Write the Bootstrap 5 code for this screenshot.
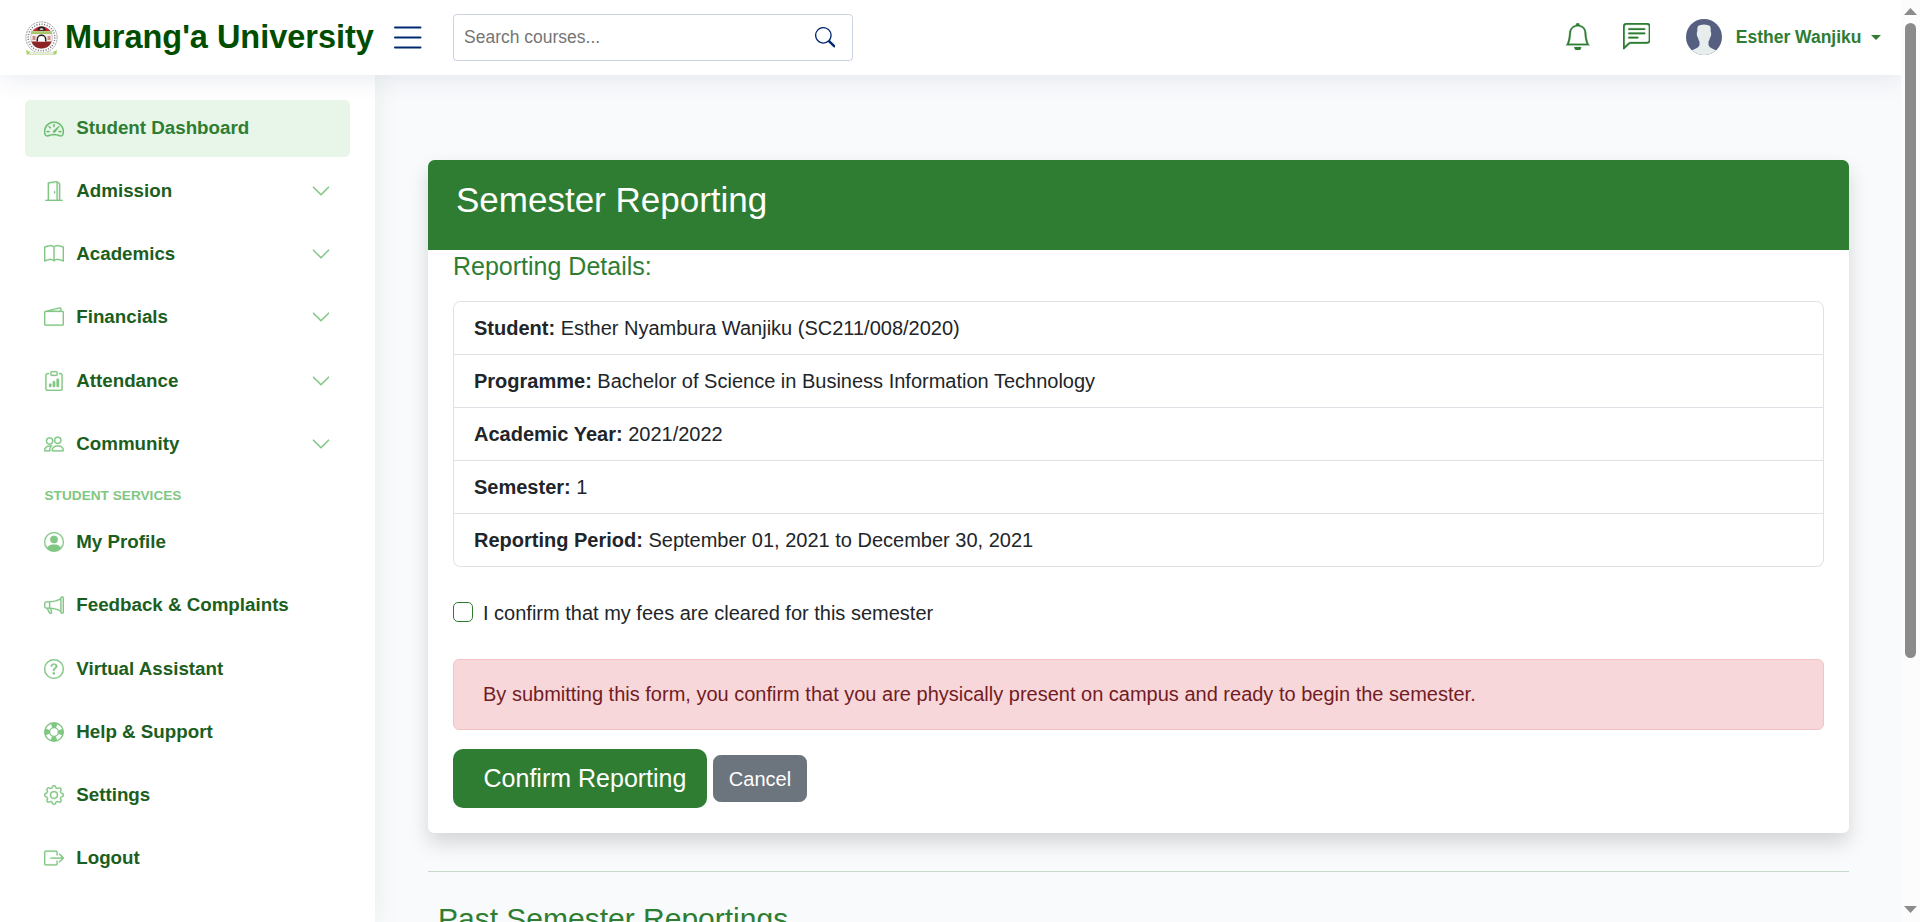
<!DOCTYPE html>
<html lang="en">
<head>
<meta charset="utf-8">
<meta name="viewport" content="width=device-width, initial-scale=1">
<title>Semester Reporting - Murang'a University</title>
<link href="https://cdn.jsdelivr.net/npm/bootstrap@5.3.0/dist/css/bootstrap.min.css" rel="stylesheet">
<style>
  html { font-size: 20px; }
  body { font-family: "Liberation Sans", Arial, sans-serif; background: #f9fafc; color: #212529; }
  svg { fill: currentColor; display: block; flex: none; }
  .ico { width: 20px; height: 20px; stroke: currentColor; stroke-width: .2px; }
  .page-header { height: 75px; padding-left: 25px; background: #fff; box-shadow: 0 2.5px 25px rgba(1, 41, 112, .1); z-index: 3; position: relative; }
  .brand { width: 350px; color: #004d00; font-size: 32.5px; font-weight: 700; line-height: 1; gap: 7px; white-space: nowrap; letter-spacing: -.03px; }
  .burger { color: #012970; width: 40px; height: 40px; margin-left: 12px; }
  .search-box { width: 400px; height: 47px; margin-left: 26px; border: 1px solid rgba(1, 41, 112, .2); border-radius: 3.75px; padding: 0 17px 0 10px; }
  .search-box input { border: 0; outline: 0; padding: 0; font-size: 17.5px; background: transparent; }
  .search-box input::placeholder { color: #757575; opacity: 1; }
  .search-box svg { color: #012970; width: 20.5px; height: 20.5px; }
  .top-icons { color: #2e7d32; padding-right: 20.5px; }
  .top-icons .glyph { width: 27.5px; height: 27.5px; stroke: currentColor; stroke-width: .15px; position: relative; top: -1px; }
  .avatar { position: relative; top: -1px; }
  .user-name { font-size: 17.5px; font-weight: 700; margin-left: 14px; }
  .user-name::after { margin-left: 9px !important; vertical-align: 3px !important; }
  .side-menu { width: 375px; padding: 25px; background: #fff; box-shadow: 0 0 25px rgba(46, 125, 50, .1); z-index: 2; position: relative; }
  .side-link { height: 57px; margin-bottom: 6.2px; padding: 0 18.75px; border-radius: 5px; font-size: 18.75px; font-weight: 700; color: #1b5e20; text-decoration: none; gap: 12.5px; }
  .side-link svg { color: #81c784; }
  .side-link.active { background: #e8f5e9; color: #2e7d32; margin-bottom: 5.5px; }
  .side-link.active svg { color: #66bb6a; }
  .side-heading { font-size: 13.65px; font-weight: 700; color: #81c784; line-height: 20px; margin: 14px 0 7.5px 19.5px; height: 20px; }
  .main-area { padding: 85px 52px 0 53px; min-width: 0; }
  .report-card { border: 0; border-radius: 6px; box-shadow: 0 10px 20px rgba(0, 0, 0, .15); height: 673px; }
  .report-head { background: #2e7d32; color: #fff; height: 90px; padding: 18.75px 28px; border-radius: 6px 6px 0 0; border-bottom: 0; }
  .report-head h3 { font-size: 35px; }
  .report-body { padding: 1px 25px 0; }
  .green-title { color: #2e7d32; }
  .list-group-item { padding: 11px 20px; border-color: #dee2e6; color: #212529; line-height: 30px; }
  .list-group { --bs-list-group-border-radius: 7.5px; margin-bottom: 30px; }
  .form-check { line-height: 30px; margin-bottom: 31px; padding-left: 30px; padding-top: 1px; min-height: 0; }
  .form-check-input { border-color: #2e7d32; width: 20px; height: 20px; margin-top: 4px; margin-left: -30px !important; border-radius: 5px; }
  .notice { background: #f8d7da; border: 1px solid #f5c2c7; color: #721c24; border-radius: 6px; height: 71px; padding: 19px 29px; margin-bottom: 19px; }
  .btn-confirm, .btn-confirm:hover { background: #2e7d32; color: #fff; font-size: 25px; height: 59px; width: 254px; border-radius: 10px; padding: 0 20px 0 30px; border: 0; }
  .btn-cancel { width: 94px; height: 47px; padding: 0; border-radius: 7.5px; }
  .divider { border-top: 1px solid #2e7d32; opacity: .25; margin: 38px 0 29px; }
  .scroll-track { width: 19px; background: #fcfcfc; color: #8b8b8b; padding: 8px 0 9px; }
  .scroll-thumb { width: 11px; height: 635px; border-radius: 6px; background: #8b8b8b; margin-top: 8px; }
</style>
</head>
<body class="d-flex vh-100 overflow-hidden">
<svg width="0" height="0" class="position-absolute" aria-hidden="true">
  <symbol id="i-speed" viewBox="0 0 16 16"><path d="M8 4a.5.5 0 0 1 .5.5V6a.5.5 0 0 1-1 0V4.5A.5.5 0 0 1 8 4zM3.732 5.732a.5.5 0 0 1 .707 0l.915.914a.5.5 0 1 1-.708.708l-.914-.915a.5.5 0 0 1 0-.707zM2 10a.5.5 0 0 1 .5-.5h1.586a.5.5 0 0 1 0 1H2.5A.5.5 0 0 1 2 10zm9.5 0a.5.5 0 0 1 .5-.5h1.5a.5.5 0 0 1 0 1H12a.5.5 0 0 1-.5-.5zm.754-4.246a.389.389 0 0 0-.527-.02L7.547 9.31a.91.91 0 1 0 1.302 1.258l3.434-4.297a.389.389 0 0 0-.029-.518z"/><path fill-rule="evenodd" d="M0 10a8 8 0 1 1 15.547 2.661c-.442 1.253-1.845 1.602-2.932 1.25C11.309 13.488 9.475 13 8 13c-1.474 0-3.31.488-4.615.911-1.087.352-2.49.003-2.932-1.25A7.988 7.988 0 0 1 0 10zm8-7a7 7 0 0 0-6.603 9.329c.203.575.923.876 1.68.63C4.397 12.533 6.358 12 8 12s3.604.532 4.923.96c.757.245 1.477-.056 1.68-.631A7 7 0 0 0 8 3z"/></symbol>
  <symbol id="i-door" viewBox="0 0 16 16"><path d="M8.5 10c-.276 0-.5-.448-.5-1s.224-1 .5-1 .5.448.5 1-.224 1-.5 1z"/><path d="M10.828.122A.5.5 0 0 1 11 .5V1h.5A1.5 1.5 0 0 1 13 2.5V15h1.5a.5.5 0 0 1 0 1h-13a.5.5 0 0 1 0-1H3V1.5a.5.5 0 0 1 .43-.495l7-1a.5.5 0 0 1 .398.117zM11.5 2H11v13h1V2.5a.5.5 0 0 0-.5-.5zM4 1.934V15h6V1.077l-6 .857z"/></symbol>
  <symbol id="i-book" viewBox="0 0 16 16"><path d="M1 2.828c.885-.37 2.154-.769 3.388-.893 1.33-.134 2.458.063 3.112.752v9.746c-.935-.53-2.12-.603-3.213-.493-1.18.12-2.37.461-3.287.811V2.828zm7.5-.141c.654-.689 1.782-.886 3.112-.752 1.234.124 2.503.523 3.388.893v9.923c-.918-.35-2.107-.692-3.287-.81-1.094-.111-2.278-.039-3.213.492V2.687zM8 1.783C7.015.936 5.587.81 4.287.94c-1.514.153-3.042.672-3.994 1.105A.5.5 0 0 0 0 2.5v11a.5.5 0 0 0 .707.455c.882-.4 2.303-.881 3.68-1.02 1.409-.142 2.59.087 3.223.877a.5.5 0 0 0 .78 0c.633-.79 1.814-1.019 3.222-.877 1.378.139 2.8.62 3.681 1.02A.5.5 0 0 0 16 13.5v-11a.5.5 0 0 0-.293-.455c-.952-.433-2.48-.952-3.994-1.105C10.413.809 8.985.936 8 1.783z"/></symbol>
  <symbol id="i-wallet" viewBox="0 0 16 16"><path d="M12.136.326A1.5 1.5 0 0 1 14 1.78V3h.5A1.5 1.5 0 0 1 16 4.5v9a1.5 1.5 0 0 1-1.5 1.5h-13A1.5 1.5 0 0 1 0 13.5v-9a1.5 1.5 0 0 1 1.432-1.499L12.136.326zM5.562 3H13V1.78a.5.5 0 0 0-.621-.484L5.562 3zM1.5 4a.5.5 0 0 0-.5.5v9a.5.5 0 0 0 .5.5h13a.5.5 0 0 0 .5-.5v-9a.5.5 0 0 0-.5-.5h-13z"/></symbol>
  <symbol id="i-clip" viewBox="0 0 16 16"><path d="M4 11a1 1 0 1 1 2 0v1a1 1 0 1 1-2 0v-1zm6-4a1 1 0 1 1 2 0v5a1 1 0 1 1-2 0V7zM7 9a1 1 0 0 1 2 0v3a1 1 0 1 1-2 0V9z"/><path d="M4 1.5H3a2 2 0 0 0-2 2V14a2 2 0 0 0 2 2h10a2 2 0 0 0 2-2V3.5a2 2 0 0 0-2-2h-1v1h1a1 1 0 0 1 1 1V14a1 1 0 0 1-1 1H3a1 1 0 0 1-1-1V3.5a1 1 0 0 1 1-1h1v-1z"/><path d="M9.5 1a.5.5 0 0 1 .5.5v1a.5.5 0 0 1-.5.5h-3a.5.5 0 0 1-.5-.5v-1a.5.5 0 0 1 .5-.5h3zm-3-1A1.5 1.5 0 0 0 5 1.5v1A1.5 1.5 0 0 0 6.5 4h3A1.5 1.5 0 0 0 11 2.5v-1A1.5 1.5 0 0 0 9.5 0h-3z"/></symbol>
  <symbol id="i-people" viewBox="0 0 16 16"><path d="M15 14s1 0 1-1-1-4-5-4-5 3-5 4 1 1 1 1h8zm-7.978-1A.261.261 0 0 1 7 12.996c.001-.264.167-1.03.76-1.72C8.312 10.629 9.282 10 11 10c1.717 0 2.687.63 3.24 1.276.593.69.758 1.457.76 1.72l-.008.002a.274.274 0 0 1-.014.002H7.022zM11 7a2 2 0 1 0 0-4 2 2 0 0 0 0 4zm3-2a3 3 0 1 1-6 0 3 3 0 0 1 6 0zM6.936 9.28a5.88 5.88 0 0 0-1.23-.247A7.35 7.35 0 0 0 5 9c-4 0-5 3-5 4 0 .667.333 1 1 1h4.216A2.238 2.238 0 0 1 5 13c0-1.01.377-2.042 1.09-2.904.243-.294.526-.569.846-.816zM4.92 10A5.493 5.493 0 0 0 4 13H1c0-.26.164-1.03.76-1.724.545-.636 1.492-1.256 3.16-1.275zM1.5 5.5a3 3 0 1 1 6 0 3 3 0 0 1-6 0zm3-2a2 2 0 1 0 0 4 2 2 0 0 0 0-4z"/></symbol>
  <symbol id="i-person" viewBox="0 0 16 16"><path d="M11 6a3 3 0 1 1-6 0 3 3 0 0 1 6 0z"/><path fill-rule="evenodd" d="M0 8a8 8 0 1 1 16 0A8 8 0 0 1 0 8zm8-7a7 7 0 0 0-5.468 11.37C3.242 11.226 4.805 10 8 10s4.757 1.225 5.468 2.37A7 7 0 0 0 8 1z"/></symbol>
  <symbol id="i-mega" viewBox="0 0 16 16"><path d="M13 2.5a1.5 1.5 0 0 1 3 0v11a1.5 1.5 0 0 1-3 0v-.214c-2.162-1.241-4.49-1.843-6.912-2.083l.405 2.712A1 1 0 0 1 5.51 15.1h-.548a1 1 0 0 1-.916-.599l-1.85-3.49a68.14 68.14 0 0 0-.202-.003A2.014 2.014 0 0 1 0 9V7a2.02 2.02 0 0 1 1.992-2.013 74.663 74.663 0 0 0 2.483-.075c3.043-.154 6.148-.849 8.525-2.199V2.5zm1 0v11a.5.5 0 0 0 1 0v-11a.5.5 0 0 0-1 0zm-1 1.35c-2.344 1.205-5.209 1.842-8 2.033v4.233c.18.01.359.022.537.036 2.568.189 5.093.744 7.463 1.993V3.85zm-9 6.215v-4.13a95.09 95.09 0 0 1-1.992.052A1.02 1.02 0 0 0 1 7v2c0 .55.448 1.002 1.006 1.009A60.49 60.49 0 0 1 4 10.065zm-.657.975 1.609 3.037.01.024h.548l-.002-.014-.443-2.966a68.019 68.019 0 0 0-1.722-.082z"/></symbol>
  <symbol id="i-question" viewBox="0 0 16 16"><path d="M8 15A7 7 0 1 1 8 1a7 7 0 0 1 0 14zm0 1A8 8 0 1 0 8 0a8 8 0 0 0 0 16z"/><path d="M5.255 5.786a.237.237 0 0 0 .241.247h.825c.138 0 .248-.113.266-.25.09-.656.54-1.134 1.342-1.134.686 0 1.314.343 1.314 1.168 0 .635-.374.927-.965 1.371-.673.489-1.206 1.06-1.168 1.987l.003.217a.25.25 0 0 0 .25.246h.811a.25.25 0 0 0 .25-.25v-.105c0-.718.273-.927 1.01-1.486.609-.463 1.244-.977 1.244-2.056 0-1.511-1.276-2.241-2.673-2.241-1.267 0-2.655.59-2.75 2.286zm1.557 5.763c0 .533.425.927 1.01.927.609 0 1.028-.394 1.028-.927 0-.552-.42-.94-1.029-.94-.584 0-1.009.388-1.009.94z"/></symbol>
  <symbol id="i-life" viewBox="0 0 16 16"><g fill="none" stroke="currentColor" stroke-width="1.1"><circle cx="8" cy="8" r="7.45"/><circle cx="8" cy="8" r="3.5"/><circle cx="8" cy="8" r="5.5" stroke-width="4" stroke-dasharray="4.32 4.32" stroke-dashoffset="2.16"/></g></symbol>
  <symbol id="i-gear" viewBox="0 0 16 16"><path d="M8 4.754a3.246 3.246 0 1 0 0 6.492 3.246 3.246 0 0 0 0-6.492zM5.754 8a2.246 2.246 0 1 1 4.492 0 2.246 2.246 0 0 1-4.492 0z"/><path d="M9.796 1.343c-.527-1.79-3.065-1.79-3.592 0l-.094.319a.873.873 0 0 1-1.255.52l-.292-.16c-1.64-.892-3.433.902-2.54 2.541l.159.292a.873.873 0 0 1-.52 1.255l-.319.094c-1.79.527-1.79 3.065 0 3.592l.319.094a.873.873 0 0 1 .52 1.255l-.16.292c-.892 1.64.901 3.434 2.541 2.54l.292-.159a.873.873 0 0 1 1.255.52l.094.319c.527 1.79 3.065 1.79 3.592 0l.094-.319a.873.873 0 0 1 1.255-.52l.292.16c1.64.893 3.434-.902 2.54-2.541l-.159-.292a.873.873 0 0 1 .52-1.255l.319-.094c1.79-.527 1.79-3.065 0-3.592l-.319-.094a.873.873 0 0 1-.52-1.255l.16-.292c.893-1.64-.902-3.433-2.541-2.54l-.292.159a.873.873 0 0 1-1.255-.52l-.094-.319zm-2.633.283c.246-.835 1.428-.835 1.674 0l.094.319a1.873 1.873 0 0 0 2.693 1.115l.291-.16c.764-.415 1.6.42 1.184 1.185l-.159.292a1.873 1.873 0 0 0 1.116 2.692l.318.094c.835.246.835 1.428 0 1.674l-.319.094a1.873 1.873 0 0 0-1.115 2.693l.16.291c.415.764-.42 1.6-1.185 1.184l-.291-.159a1.873 1.873 0 0 0-2.693 1.116l-.094.318c-.246.835-1.428.835-1.674 0l-.094-.319a1.873 1.873 0 0 0-2.692-1.115l-.292.16c-.764.415-1.6-.42-1.184-1.185l.159-.291A1.873 1.873 0 0 0 1.945 8.93l-.319-.094c-.835-.246-.835-1.428 0-1.674l.319-.094A1.873 1.873 0 0 0 3.06 4.377l-.16-.292c-.415-.764.42-1.6 1.185-1.184l.292.159a1.873 1.873 0 0 0 2.692-1.115l.094-.319z"/></symbol>
  <symbol id="i-exit" viewBox="0 0 16 16"><path d="M10 12.5a.5.5 0 0 1-.5.5h-8a.5.5 0 0 1-.5-.5v-9a.5.5 0 0 1 .5-.5h8a.5.5 0 0 1 .5.5v2a.5.5 0 0 0 1 0v-2A1.5 1.5 0 0 0 9.5 2h-8A1.5 1.5 0 0 0 0 3.5v9A1.5 1.5 0 0 0 1.5 14h8a1.5 1.5 0 0 0 1.5-1.5v-2a.5.5 0 0 0-1 0v2z"/><path d="M15.854 8.354a.5.5 0 0 0 0-.708l-3-3a.5.5 0 0 0-.708.708L14.293 7.5H5.5a.5.5 0 0 0 0 1h8.793l-2.147 2.146a.5.5 0 0 0 .708.708l3-3z"/></symbol>
  <symbol id="i-down" viewBox="0 0 16 16"><path d="M1.646 4.646a.5.5 0 0 1 .708 0L8 10.293l5.646-5.647a.5.5 0 0 1 .708.708l-6 6a.5.5 0 0 1-.708 0l-6-6a.5.5 0 0 1 0-.708z"/></symbol>
</svg>

<div class="d-flex flex-column flex-grow-1 overflow-hidden">
  <header class="page-header d-flex align-items-center flex-shrink-0">
    <a class="brand d-flex align-items-center text-decoration-none" href="#">
      <svg width="33" height="34" viewBox="0 0 33 34">
        <circle cx="16.5" cy="16.500" r="15.6" fill="#fff" stroke="#888" stroke-width=".8" stroke-dasharray="2 .8"/>
        <circle cx="16.5" cy="16.500" r="13.300" fill="none" stroke="#777" stroke-width="1.6" stroke-dasharray="1 1.6"/>
        <circle cx="16.5" cy="16.500" r="11" fill="#f6ebe9" stroke="#888" stroke-width=".4"/>
        <path d="M7.600 10a11 11 0 0 1 17.800 0z" fill="#c9252b"/>
        <path d="M12.500 9.500a4 4 0 0 1 8 0z" fill="#222"/>
        <path d="M14.500 8.800a2 1.600 0 0 1 4 0z" fill="#fff"/>
        <path d="M6 10.200h21v2.800H6z" fill="#a5c96a"/>
        <path d="M6.300 20.500h20.400a11 11 0 0 1-20.400 0z" fill="#8f2424"/>
        <path d="M12.300 20.500v-2a4.200 4.200 0 0 1 8.400 0v2" fill="#fff" stroke="#222" stroke-width="1.500"/>
        <path d="M7.500 15h3v4h-3zM22.500 15h3v4h-3z" fill="#c98f8c"/>
        <path d="M1 29l3 1.500q12.500 2.500 25 0l3-1.500-.7 4.500H1.700z" fill="#a9d36f"/>
        <path d="M4.500 30.600q12 1.800 24 0v2.400h-24z" fill="#e9ebe0"/>
      </svg>
      <span>Murang'a University</span>
    </a>
    <svg class="burger" viewBox="0 0 40 40"><path fill="none" stroke="currentColor" stroke-width="2" stroke-linecap="round" d="M8 9.500h25.500M8 19.500h25.500M8 29.500h25.500"/></svg>
    <form class="search-box d-flex align-items-center">
      <input class="flex-grow-1" type="text" placeholder="Search courses...">
      <svg viewBox="0 0 16 16"><path d="M11.742 10.344a6.500 6.500 0 1 0-1.397 1.398h-.001c.03.04.062.078.098.115l3.850 3.850a1 1 0 0 0 1.415-1.414l-3.850-3.850a1.007 1.007 0 0 0-.115-.1zM12 6.500a5.500 5.500 0 1 1-11 0 5.500 5.500 0 0 1 11 0z"/></svg>
    </form>
    <div class="top-icons d-flex align-items-center ms-auto">
      <svg class="glyph" style="margin-right:31px" viewBox="0 0 16 16"><path d="M8 16a2 2 0 0 0 2-2H6a2 2 0 0 0 2 2zM8 1.918l-.797.161A4.002 4.002 0 0 0 4 6c0 .628-.134 2.197-.459 3.742-.16.767-.376 1.566-.663 2.258h10.244c-.287-.692-.502-1.490-.663-2.258C12.134 8.197 12 6.628 12 6a4.002 4.002 0 0 0-3.203-3.920L8 1.917zM14.220 12c.223.447.481.801.78 1H1c.299-.199.557-.553.78-1C2.680 10.200 3 6.880 3 6c0-2.420 1.720-4.440 4.005-4.901a1 1 0 1 1 1.990 0A5.002 5.002 0 0 1 13 6c0 .88.32 4.200 1.220 6z"/></svg>
      <svg class="glyph" style="margin-right:35.500px" viewBox="0 0 16 16"><path d="M14 1a1 1 0 0 1 1 1v8a1 1 0 0 1-1 1H4.414A2 2 0 0 0 3 11.586l-2 2V2a1 1 0 0 1 1-1h12zM2 0a2 2 0 0 0-2 2v12.793a.5.5 0 0 0 .854.353l2.853-2.853A1 1 0 0 1 4.414 12H14a2 2 0 0 0 2-2V2a2 2 0 0 0-2-2H2z"/><path d="M3 3.500a.5.5 0 0 1 .5-.5h9a.5.5 0 0 1 0 1h-9a.5.5 0 0 1-.5-.5zM3 6a.5.5 0 0 1 .5-.5h9a.5.5 0 0 1 0 1h-9A.5.5 0 0 1 3 6zm0 2.500a.5.5 0 0 1 .5-.5h5a.5.5 0 0 1 0 1h-5a.5.5 0 0 1-.5-.5z"/></svg>
      <svg class="avatar" width="36" height="36" viewBox="0 0 36 36"><defs><clipPath id="round"><circle cx="18" cy="18" r="18"/></clipPath></defs><g clip-path="url(#round)"><path fill="#556080" d="M0 0h36v36H0z"/><path fill="#e7eced" d="M12 7q2-1.500 6-1.500t6 1.500q1 1.500 .8 6 .6 .3 .4 2.500-.3 2.500-1.200 3-.4 2.500-1.500 4v3.500q.5 2 3.500 3.500l5.500 2.500v4h-27v-4l5.500-2.500q3-1.500 3.500-3.500v-3.500q-1.100-1.500-1.500-4-.9-.5-1.200-3-.2-2.200 .4-2.500-.2-4.500 .8-6z"/></g></svg>
      <span class="user-name dropdown-toggle">Esther Wanjiku</span>
    </div>
  </header>

  <div class="d-flex flex-grow-1 overflow-hidden">
    <aside class="side-menu flex-shrink-0">
      <a class="side-link active d-flex align-items-center" href="#"><svg class="ico"><use href="#i-speed"/></svg>Student Dashboard</a>
      <a class="side-link d-flex align-items-center" href="#"><svg class="ico"><use href="#i-door"/></svg>Admission<svg class="ico ms-auto"><use href="#i-down"/></svg></a>
      <a class="side-link d-flex align-items-center" href="#"><svg class="ico"><use href="#i-book"/></svg>Academics<svg class="ico ms-auto"><use href="#i-down"/></svg></a>
      <a class="side-link d-flex align-items-center" href="#"><svg class="ico"><use href="#i-wallet"/></svg>Financials<svg class="ico ms-auto"><use href="#i-down"/></svg></a>
      <a class="side-link d-flex align-items-center" href="#"><svg class="ico"><use href="#i-clip"/></svg>Attendance<svg class="ico ms-auto"><use href="#i-down"/></svg></a>
      <a class="side-link d-flex align-items-center" href="#"><svg class="ico"><use href="#i-people"/></svg>Community<svg class="ico ms-auto"><use href="#i-down"/></svg></a>
      <div class="side-heading text-uppercase">Student Services</div>
      <a class="side-link d-flex align-items-center" href="#"><svg class="ico"><use href="#i-person"/></svg>My Profile</a>
      <a class="side-link d-flex align-items-center" href="#"><svg class="ico"><use href="#i-mega"/></svg>Feedback &amp; Complaints</a>
      <a class="side-link d-flex align-items-center" href="#"><svg class="ico"><use href="#i-question"/></svg>Virtual Assistant</a>
      <a class="side-link d-flex align-items-center" href="#"><svg class="ico"><use href="#i-life"/></svg>Help &amp; Support</a>
      <a class="side-link d-flex align-items-center" href="#"><svg class="ico"><use href="#i-gear"/></svg>Settings</a>
      <a class="side-link d-flex align-items-center" href="#"><svg class="ico"><use href="#i-exit"/></svg>Logout</a>
    </aside>

    <main class="main-area flex-grow-1">
      <div class="card report-card">
        <div class="card-header report-head"><h3 class="mb-0">Semester Reporting</h3></div>
        <div class="card-body report-body">
          <h5 class="green-title" style="margin-bottom:20px">Reporting Details:</h5>
          <ul class="list-group">
            <li class="list-group-item"><strong>Student:</strong> Esther Nyambura Wanjiku (SC211/008/2020)</li>
            <li class="list-group-item"><strong>Programme:</strong> Bachelor of Science in Business Information Technology</li>
            <li class="list-group-item"><strong>Academic Year:</strong> 2021/2022</li>
            <li class="list-group-item"><strong>Semester:</strong> 1</li>
            <li class="list-group-item"><strong>Reporting Period:</strong> September 01, 2021 to December 30, 2021</li>
          </ul>
          <div class="form-check">
            <input class="form-check-input" type="checkbox" id="fees">
            <label class="form-check-label" for="fees">I confirm that my fees are cleared for this semester</label>
          </div>
          <div class="notice">By submitting this form, you confirm that you are physically present on campus and ready to begin the semester.</div>
          <div class="d-flex align-items-center">
            <button type="button" class="btn btn-confirm">Confirm Reporting</button>
            <button type="button" class="btn btn-secondary btn-cancel" style="margin-left:6px">Cancel</button>
          </div>
        </div>
      </div>
      <hr class="divider">
      <h4 class="green-title text-nowrap" style="padding-left:10px">Past Semester Reportings</h4>
    </main>
  </div>
</div>

<div class="scroll-track d-flex flex-column align-items-center flex-shrink-0">
  <svg width="13" height="7" viewBox="0 0 13 7"><path d="M6.500 0L13 7H0z"/></svg>
  <div class="scroll-thumb"></div>
  <svg class="mt-auto" width="13" height="7" viewBox="0 0 13 7"><path d="M0 0h13L6.500 7z"/></svg>
</div>
<script src="https://cdn.jsdelivr.net/npm/bootstrap@5.3.0/dist/js/bootstrap.bundle.min.js"></script>
</body>
</html>
